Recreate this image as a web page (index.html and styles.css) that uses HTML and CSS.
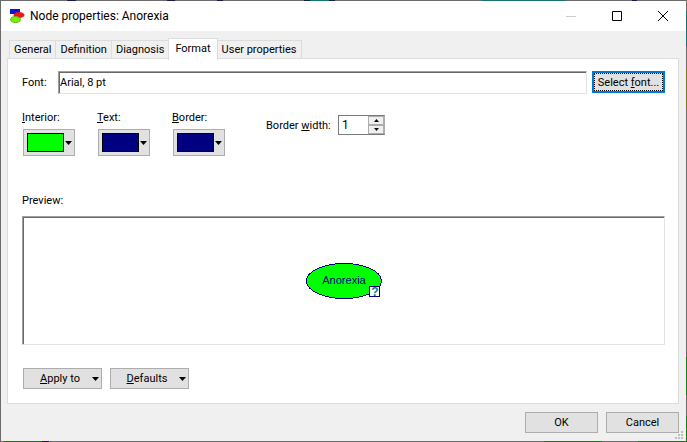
FILE: index.html
```html
<!DOCTYPE html>
<html lang="en">

<head>
    <meta charset="utf-8">
    <title>Node properties: Anorexia</title>
    <link rel="stylesheet" href="styles.css">
</head>

<body>
    <form class="window">
        <header class="titlebar">
            <svg class="app-icon" width="16" height="14" viewBox="0 0 16 14">
                <rect x="1" y="0" width="10" height="5" fill="#0f14d2"/>
                <ellipse cx="10" cy="6" rx="5.5" ry="3" fill="#f01414"/>
                <ellipse cx="6.5" cy="10.5" rx="5" ry="3" fill="#7df000" stroke="#58b010" stroke-width="1"/>
            </svg>
            <h1>Node properties: Anorexia</h1>
            <button type="button" class="caption" aria-label="Minimize" disabled>
                <svg width="10" height="10"><path d="M0 5.5H10" stroke="#ccc"/></svg>
            </button>
            <button type="button" class="caption" aria-label="Maximize">
                <svg width="10" height="10"><path d="M.5 .5H9.5V9.5H.5Z" fill="none" stroke="#000"/></svg>
            </button>
            <button type="button" class="caption" aria-label="Close">
                <svg width="10" height="10"><path d="M0 0L10 10M10 0L0 10" stroke="#000"/></svg>
            </button>
        </header>

        <div class="content">
            <nav class="tabs" role="tablist">
                <button type="button" role="tab" class="tab">General</button>
                <button type="button" role="tab" class="tab">Definition</button>
                <button type="button" role="tab" class="tab">Diagnosis</button>
                <button type="button" role="tab" class="tab active" aria-selected="true">Format</button>
                <button type="button" role="tab" class="tab">User properties</button>
            </nav>

            <section class="panel" role="tabpanel">
                <div class="font-row">
                    <label for="font">Font:</label>
                    <input class="sunken" type="text" id="font" value="Arial, 8 pt" readonly>
                    <button type="button" class="button focused">Select&nbsp;<u>f</u>ont...</button>
                </div>

                <div class="style-row">
                    <div class="color">
                        <label for="interior"><u>I</u>nterior:</label>
                        <button type="button" class="button picker" id="interior">
                            <span class="swatch green"></span>
                            <svg class="arrow" width="7" height="4"><path d="M0 0H7L3.5 4Z"/></svg>
                        </button>
                    </div>
                    <div class="color">
                        <label for="text"><u>T</u>ext:</label>
                        <button type="button" class="button picker" id="text">
                            <span class="swatch navy"></span>
                            <svg class="arrow" width="7" height="4"><path d="M0 0H7L3.5 4Z"/></svg>
                        </button>
                    </div>
                    <div class="color">
                        <label for="border"><u>B</u>order:</label>
                        <button type="button" class="button picker" id="border">
                            <span class="swatch navy"></span>
                            <svg class="arrow" width="7" height="4"><path d="M0 0H7L3.5 4Z"/></svg>
                        </button>
                    </div>
                    <div class="border-width">
                        <label for="width">Border <u>w</u>idth:</label>
                        <div class="spinner">
                            <input type="number" id="width" value="1" min="1">
                            <div class="steps">
                                <button type="button" aria-label="Increase"><svg width="5" height="3"><path d="M0 3H5L2.5 0Z"/></svg></button>
                                <button type="button" aria-label="Decrease"><svg width="5" height="3"><path d="M0 0H5L2.5 3Z"/></svg></button>
                            </div>
                        </div>
                    </div>
                </div>

                <h2>Preview:</h2>
                <div class="preview sunken">
                    <svg width="78" height="38" viewBox="0 0 78 38">
                        <ellipse cx="39" cy="19" rx="37.5" ry="17.5" fill="#0f0" stroke="#000080" shape-rendering="crispEdges"/>
                        <text class="node-name" x="39" y="22" text-anchor="middle">Anorexia</text>
                        <rect x="64.5" y="24.5" width="10" height="10" fill="#fff" stroke="#000080"/>
                        <text class="node-mark" x="70" y="34" text-anchor="middle">?</text>
                    </svg>
                </div>

                <div class="menus">
                    <button type="button" class="button menu">
                        <span><u>A</u>pply to</span>
                        <svg class="arrow" width="7" height="4"><path d="M0 0H7L3.5 4Z"/></svg>
                    </button>
                    <button type="button" class="button menu">
                        <span><u>D</u>efaults</span>
                        <svg class="arrow" width="7" height="4"><path d="M0 0H7L3.5 4Z"/></svg>
                    </button>
                </div>
            </section>
        </div>

        <footer class="actions">
            <button type="submit" class="button">OK</button>
            <button type="button" class="button">Cancel</button>
            <svg class="grip" width="8" height="8" fill="#bfbfbf">
                <path d="M6 0h2v2h-2zM3 3h2v2h-2zM6 3h2v2h-2zM0 6h2v2h-2zM3 6h2v2h-2zM6 6h2v2h-2z"/>
            </svg>
        </footer>
    </form>
</body>

</html>
```

FILE: styles.css
```css
* {
    box-sizing: border-box;
}

body {
    margin: 0;
}

body, button, input {
    font-family: Roboto, "Liberation Sans", Arial, sans-serif;
    font-size: 11px;
    line-height: 13px;
    color: #000;
}

h1, h2 {
    margin: 0;
    font-size: 11px;
    font-weight: 400;
}

button {
    padding: 0;
    border: 0;
    background: none;
}

svg {
    display: block;
}

u {
    text-underline-offset: 1px;
    text-decoration-thickness: 1px;
    text-decoration-skip-ink: none;
}

.window {
    display: flex;
    flex-direction: column;
    position: relative;
    min-height: 100vh;
    padding: 1px;
    background:
        linear-gradient(90deg, transparent 67px, #1c1850 67px 76px, transparent 76px 167px, #1c1850 167px 175px, transparent 175px 217px, #1c1850 217px 223px, transparent 223px 304px, #1c1850 304px 310px, #14716f 310px 329px, #1c1850 329px 335px, transparent 335px 482px, #14716f 482px 565px, transparent 565px 632px, #1c1850 632px 637px, transparent 637px) top / 100% 1px no-repeat,
        linear-gradient(90deg, transparent 4px, #0c7a1c 4px 42px, #1c1850 42px 49px, transparent 49px 544px, #0c7a1c 544px 602px, transparent 602px 638px, #0c7a1c 638px) bottom / 100% 1px no-repeat,
        linear-gradient(#6b6b6b 11px, #14716f 11px 46px, #6b6b6b 46px 67px, #77761c 67px 110px, #6b6b6b 110px 357px, #0c7a1c 357px 395px, #6b6b6b 395px 416px, #0c7a1c 416px) right / 1px 100% no-repeat,
        #6b6b6b;
}

.titlebar {
    display: flex;
    align-items: center;
    height: 30px;
    padding-left: 8px;
    background: #fff;
}

.titlebar h1 {
    flex: 1;
    margin-left: 5px;
    font-size: 12px;
    line-height: 16px;
}

.caption {
    display: grid;
    place-items: center;
    width: 46px;
    height: 30px;
}

.content {
    display: flex;
    flex-direction: column;
    flex: 1;
    padding: 7px 7px 0 6px;
    background: #f0f0f0;
}

.tabs {
    display: flex;
    align-items: flex-end;
    padding-left: 2px;
}

.tab {
    height: 19px;
    margin-right: -1px;
    padding: 0 4px;
    border: 1px solid #dcdcdc;
    background: #f0f0f0;
}

.tab.active {
    z-index: 1;
    height: 22px;
    margin-bottom: -1px;
    padding: 0 6px 3px;
    border-bottom: 0;
    background: #fff;
}

.panel {
    display: flex;
    flex-direction: column;
    flex: 1;
    margin-top: -1px;
    padding: 11px 13px 14px 14px;
    border: 1px solid #dcdcdc;
    background: #fff;
}

.button {
    display: flex;
    align-items: center;
    justify-content: center;
    width: 73px;
    height: 21px;
    border: 1px solid #adadad;
    background: #e1e1e1;
}

.button.focused {
    height: 22px;
    border: 2px solid #0078d7;
    outline: 1px dotted #000;
    outline-offset: -3px;
}

.sunken {
    border: 1px solid;
    border-color: #a0a0a0 #e3e3e3 #e3e3e3 #a0a0a0;
    box-shadow: inset 1px 1px #696969;
}

.font-row {
    display: flex;
    align-items: center;
    gap: 5px;
    height: 24px;
}

.font-row label {
    width: 31px;
}

.font-row input {
    flex: 1;
    min-width: 0;
    height: 23px;
    padding: 0 1px;
}

.style-row {
    display: flex;
    margin-top: 17px;
}

.color {
    width: 75px;
}

.picker {
    justify-content: flex-start;
    gap: 1px;
    width: 52px;
    height: 27px;
    margin: 5px 0 0 1px;
    padding-left: 3px;
}

.swatch {
    width: 37px;
    height: 19px;
    border: 1px solid #000;
}

.green {
    background: #0f0;
}

.navy {
    background: #000080;
}

.border-width {
    display: flex;
    align-items: center;
    height: 20px;
    margin: 4px 0 0 19px;
}

.border-width label {
    width: 72px;
}

.spinner {
    display: flex;
    width: 47px;
    height: 20px;
    border: 1px solid #7a7a7a;
    border-right-color: #adadad;
}

.spinner input {
    flex: 1;
    min-width: 0;
    padding: 0 3px;
    border: 0;
    font-size: 12px;
    appearance: textfield;
}

.spinner input::-webkit-inner-spin-button {
    appearance: none;
}

.steps {
    display: flex;
    flex-direction: column;
    width: 16px;
    background: #f0f0f0;
}

.steps button {
    display: grid;
    place-items: center;
    flex: 1;
    border: 1px solid #adadad;
}

h2 {
    margin-top: 38px;
}

.preview {
    display: grid;
    place-items: center;
    flex: 1;
    min-height: 60px;
    margin-top: 9px;
}

.node-name, .node-mark {
    font-family: "Liberation Sans", Arial, sans-serif;
    fill: #000080;
}

.node-mark {
    fill: #008080;
    font-size: 12px;
    font-weight: 700;
}

.menus {
    display: flex;
    gap: 8px;
    margin: 23px 0 0 1px;
}

.menu {
    width: 79px;
    padding-right: 2px;
}

.menu span {
    flex: 1;
    padding-left: 4px;
}

.actions {
    display: flex;
    justify-content: flex-end;
    gap: 8px;
    padding: 8px 7px;
    background: #f0f0f0;
}

.grip {
    position: absolute;
    right: 4px;
    bottom: 3px;
}
```
